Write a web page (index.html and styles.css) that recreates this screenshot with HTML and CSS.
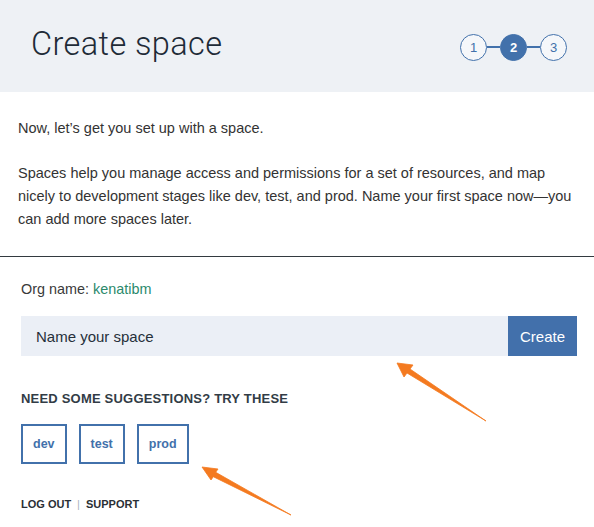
FILE: index.html
```html
<!DOCTYPE html>
<html lang="en">
<head>
<meta charset="utf-8">
<title>Create space</title>
<link rel="stylesheet" href="styles.css">
</head>
<body>
<div class="page">
  <header class="header">
    <h1 class="title">Create space</h1>
    <ol class="steps">
      <li class="step">1</li>
      <li class="step-line"></li>
      <li class="step active">2</li>
      <li class="step-line"></li>
      <li class="step">3</li>
    </ol>
  </header>

  <section class="intro">
    <p class="lead">Now, let’s get you set up with a space.</p>
    <p class="desc">Spaces help you manage access and permissions for a set of resources, and map nicely to development stages like dev, test, and prod. Name your first space now—you can add more spaces later.</p>
  </section>

  <section class="form">
    <p class="org">Org name: <span class="org-name">kenatibm</span></p>
    <div class="input-row">
      <input class="space-input" type="text" placeholder="Name your space">
      <button class="create-btn" type="button">Create</button>
    </div>
    <h2 class="suggest-title">NEED SOME SUGGESTIONS? TRY THESE</h2>
    <div class="chips">
      <button class="chip" type="button">dev</button>
      <button class="chip" type="button">test</button>
      <button class="chip" type="button">prod</button>
    </div>
    <nav class="footer-links">
      <a class="flink">LOG OUT</a>
      <span class="sep">|</span>
      <a class="flink">SUPPORT</a>
    </nav>
  </section>

  <svg class="arrows" width="594" height="527" viewBox="0 0 594 527" aria-hidden="true">
    <polygon class="arrow" points="397,363 413,365 410,369 486,421 407,373 404,377"/>
    <polygon class="arrow" points="202,467 218,469 215.7,472.3 291,515 213.3,476.7 211,480"/>
  </svg>
</div>
</body>
</html>
```

FILE: styles.css
```css
* { box-sizing: border-box; }

html, body {
  margin: 0;
  padding: 0;
  background: #ffffff;
}

body {
  font-family: "Helvetica Neue", Helvetica, "Liberation Sans", Arial, sans-serif;
  color: #333333;
  width: 594px;
  height: 527px;
  overflow: hidden;
}

.page {
  position: relative;
  width: 594px;
  height: 527px;
}

.header {
  height: 92px;
  background: #eef1f5;
  display: flex;
  align-items: center;
  justify-content: space-between;
  padding: 0 27px 0 31px;
}

.title {
  margin: 0 0 4px 0;
  font-family: Roboto, "Liberation Sans", sans-serif;
  font-weight: 300;
  font-size: 32.5px;
  line-height: 40px;
  color: #1e2b37;
  letter-spacing: 0.4px;
}

.steps {
  list-style: none;
  margin: 2px 0 0 0;
  padding: 0;
  display: flex;
  align-items: center;
}

.step {
  width: 27px;
  height: 27px;
  border: 1.5px solid #4271ab;
  border-radius: 50%;
  display: flex;
  align-items: center;
  justify-content: center;
  font-size: 13px;
  color: #4271ab;
  font-family: "Liberation Sans", Arial, sans-serif;
  background: #f5f7fa;
}

.step.active {
  background: #4271ab;
  color: #ffffff;
  font-weight: bold;
}

.step-line {
  width: 13px;
  height: 1.5px;
  background: #4271ab;
}

.intro {
  padding: 25px 18px 25px 18px;
  border-bottom: 1px solid #333a40;
}

.intro p {
  margin: 0;
  font-size: 14.5px;
  line-height: 23px;
  color: #333333;
}

.intro .desc {
  margin-top: 22px;
}

.form {
  padding: 21px 17px 0 21px;
}

.org {
  margin: 0;
  font-size: 14.4px;
  line-height: 23px;
  color: #3a3a3a;
}

.org-name {
  color: #2b8a6c;
}

.input-row {
  display: flex;
  margin-top: 15px;
  height: 40px;
}

.space-input {
  flex: 1;
  height: 40px;
  border: none;
  background: #ebeff6;
  padding: 0 15px;
  font-family: "Helvetica Neue", Helvetica, "Liberation Sans", Arial, sans-serif;
  font-size: 15px;
  color: #222;
  outline: none;
}

.space-input::placeholder {
  color: #26303a;
  opacity: 1;
}

.create-btn {
  width: 69px;
  height: 40px;
  border: none;
  background: #4270ab;
  color: #ffffff;
  font-family: "Helvetica Neue", Helvetica, "Liberation Sans", Arial, sans-serif;
  font-size: 15px;
  padding: 0;
}

.suggest-title {
  margin: 33px 0 0 0;
  font-size: 13px;
  line-height: 20px;
  font-weight: bold;
  color: #323c46;
  letter-spacing: 0.2px;
}

.chips {
  display: flex;
  gap: 12px;
  margin-top: 15px;
}

.chip {
  height: 40px;
  border: 2px solid #4271ab;
  background: #ffffff;
  color: #4271ab;
  font-family: "Helvetica Neue", Helvetica, "Liberation Sans", Arial, sans-serif;
  font-size: 12.5px;
  font-weight: bold;
  padding: 0 10px;
}

.footer-links {
  margin-top: 32px;
  display: flex;
  align-items: center;
  font-size: 11px;
  line-height: 16px;
  font-weight: bold;
  color: #2a2f35;
}

.flink {
  color: #2a2f35;
}

.sep {
  color: #a9b4c0;
  font-weight: normal;
  margin: 0 6px 0 6px;
}

.arrows {
  position: absolute;
  left: 0;
  top: 0;
  pointer-events: none;
}

.arrow {
  fill: #f47a20;
  stroke: #f47a20;
  stroke-width: 0.8;
  stroke-linejoin: round;
}
```
